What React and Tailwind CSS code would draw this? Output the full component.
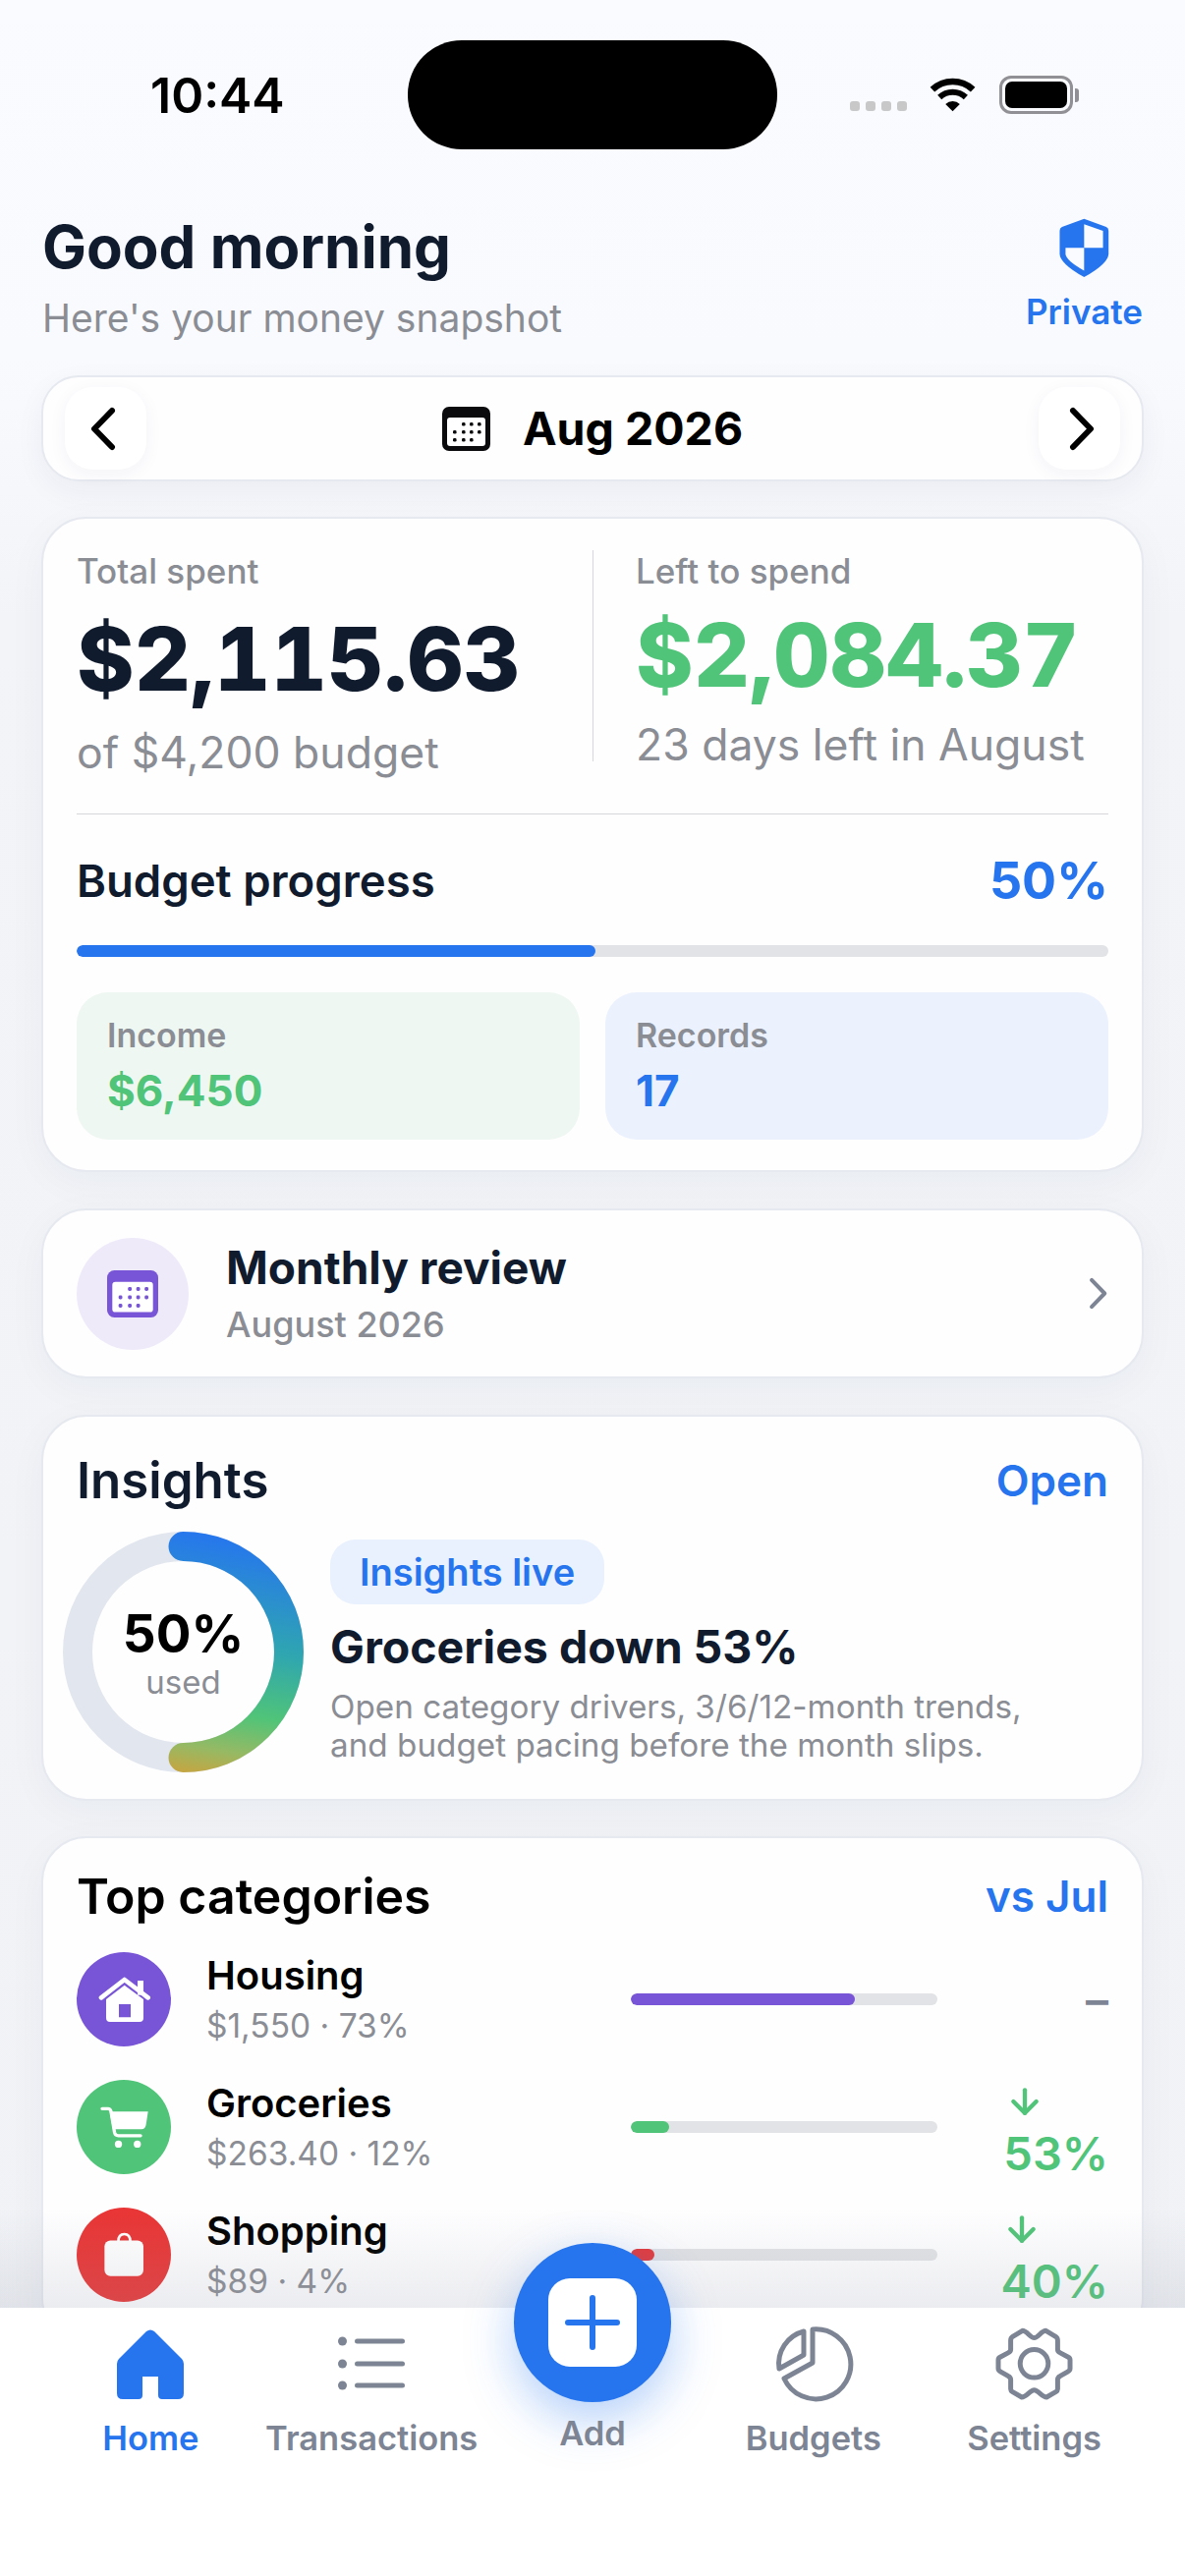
import { ArrowDown } from "lucide-react";

const cardClass = "mx-[42px] rounded-[46px] border-2 border-[#e6e9ef] bg-[#fefeff] shadow-[0_10px_40px_rgba(30,41,70,0.04)]";

const Wifi = () => (
  <svg width="50" height="38" viewBox="280 52 165 125" fill="none">
    <path d="M293 95A100 100 0 0 1 429 95" stroke="#000" strokeWidth="22" />
    <path d="M317 121A65 65 0 0 1 405 121" stroke="#000" strokeWidth="20" />
    <path d="M361 168L337 144A34 34 0 0 1 385 144Z" fill="#000" />
  </svg>
);

const Shield = () => (
  <svg width="55" height="63" viewBox="680 478 165 190">
    <path d="M762 483L830 508Q837 511 837 520L837 590Q837 620 762 662Q687 620 687 590L687 520Q687 511 694 508Z" fill="#2675ef" />
    <path d="M762 500L820 520L820 572L762 572Z" fill="#fafbff" />
    <path d="M705 572L762 572L762 642Q705 610 705 590Z" fill="#fafbff" />
  </svg>
);

const Chevron = ({ dir, width, height, stroke, color }) => (
  <svg width={width} height={height} viewBox="0 0 27 45" fill="none" stroke={color} strokeWidth={stroke} strokeLinecap="round" strokeLinejoin="round">
    <path d={dir === "left" ? "M23 4L5 22.5L23 41" : "M4 4L22 22.5L4 41"} />
  </svg>
);

const CalendarIcon = ({ color, width, height }) => {
  const dots = [
    [20, 16], [28, 16], [36, 16],
    [11, 24], [20, 24], [28, 24], [36, 24],
    [11, 32], [20, 32], [28, 32],
  ];
  return (
    <svg width={width} height={height} viewBox="0 0 49 45">
      <rect width="49" height="45" rx="7" fill={color} />
      <rect x="5" y="11" width="39" height="29" rx="3" fill="#fff" />
      {dots.map(([x, y]) => (
        <rect key={`${x}-${y}`} x={x} y={y} width="3.6" height="3.6" rx="1.4" fill={color} />
      ))}
    </svg>
  );
};

const HouseIcon = () => (
  <svg width="55" height="50" viewBox="85 90 165 150">
    <path d="M208 108H226V152H208Z" fill="#fff" />
    <path d="M97 160L168 105L240 160" fill="none" stroke="#fff" strokeWidth="14" strokeLinecap="round" strokeLinejoin="round" />
    <path fillRule="evenodd" d="M112 165L168 122L226 165V222Q226 234 214 234H124Q112 234 112 222ZM151 180V220H187V180Z" fill="#fff" />
  </svg>
);

const CartIcon = () => (
  <svg width="53" height="47" viewBox="85 485 160 140">
    <path d="M97 497H115Q122 497 124 505L135 570Q137 580 147 580H215" fill="none" stroke="#fff" strokeWidth="10" strokeLinecap="round" />
    <path d="M120 506H238L232 545Q230 560 218 560H130Z" fill="#fff" />
    <circle cx="147" cy="606" r="11" fill="#fff" />
    <circle cx="205" cy="606" r="11" fill="#fff" />
  </svg>
);

const BagIcon = () => (
  <svg width="47" height="47" viewBox="100 880 140 140">
    <path d="M152 908Q152 886 170 886Q188 886 188 908" fill="none" stroke="#fff" strokeWidth="8" />
    <rect x="110" y="905" width="118" height="108" rx="18" fill="#fff" />
  </svg>
);

const HomeNavIcon = () => (
  <svg width="68" height="71" viewBox="0 0 68 71">
    <path d="M30 2Q34 -1 38 2L66 30Q68 32 68 35V65Q68 71 62 71H46Q42 71 42 67V48H26V67Q26 71 22 71H6Q0 71 0 65V35Q0 32 2 30Z" fill="#2675ef" />
  </svg>
);

const ListNavIcon = () => (
  <svg width="68" height="74" viewBox="0 0 68 74">
    {[14, 37, 59].map((y) => (
      <g key={y}>
        <circle cx="4.5" cy={y} r="4.5" fill="#7d8594" />
        <rect x="17" y={y - 2.5} width="51" height="5" rx="2.5" fill="#7d8594" />
      </g>
    ))}
  </svg>
);

const PieNavIcon = () => (
  <svg width="85" height="85" viewBox="0 0 85 85" fill="none" stroke="#7d8594" strokeWidth="5" strokeLinejoin="round">
    <path d="M42 7A35.5 35.5 0 1 1 13 57L42 41Z" />
    <path d="M33 9A34 34 0 0 0 8 47L33 33Z" />
  </svg>
);

const GearNavIcon = () => (
  <svg width="82" height="78" viewBox="725 50 245 235" fill="none" stroke="#7d8594" strokeWidth="15" strokeLinejoin="round">
    <path d="M846 88C858 88 868 66 882 66L912 84Q918 88 918 96L918 124Q918 130 926 134L952 148Q956 150 956 156L956 182Q956 188 950 191L926 205Q918 209 918 216L918 245Q918 250 912 254L884 270C870 270 858 248 846 248C834 248 822 270 808 270L780 254Q774 250 774 245L774 216Q774 209 766 205L742 191Q736 188 736 182L736 156Q736 150 740 148L766 134Q774 130 774 124L774 96Q774 88 780 84L810 66C824 66 834 88 846 88Z" />
    <circle cx="846" cy="167" r="43" />
  </svg>
);

const InsightRing = () => (
  <div className="relative -ml-[14px] h-[245px] w-[245px] shrink-0">
    <svg width="245" height="245" viewBox="0 0 245 245" fill="none">
      <defs>
        <linearGradient id="ringGradient" gradientUnits="userSpaceOnUse" x1="150" y1="0" x2="110" y2="245">
          <stop offset="0" stopColor="#2675ef" />
          <stop offset="0.45" stopColor="#2fa6b0" />
          <stop offset="0.72" stopColor="#50c478" />
          <stop offset="0.88" stopColor="#96b964" />
          <stop offset="1" stopColor="#c9a43f" />
        </linearGradient>
      </defs>
      <circle cx="122.5" cy="122.5" r="107.5" stroke="#e2e6ee" strokeWidth="30" />
      <path d="M122.5 15A107.5 107.5 0 0 1 122.5 230" stroke="url(#ringGradient)" strokeWidth="30" strokeLinecap="round" />
    </svg>
    <div className="absolute inset-0 flex flex-col items-center justify-center">
      <span className="text-[53px] leading-[60px] font-bold text-black">50%</span>
      <span className="text-[33px] leading-[38px] text-[#8b8d94]">used</span>
    </div>
  </div>
);

const categories = [
  { name: "Housing", sub: "$1,550 · 73%", tone: "bg-[#7855d6]", bar: "w-[228px]", Icon: HouseIcon },
  { name: "Groceries", sub: "$263.40 · 12%", tone: "bg-[#50c478]", bar: "w-[39px]", Icon: CartIcon, delta: "53%" },
  { name: "Shopping", sub: "$89 · 4%", tone: "bg-[#e93535]", bar: "w-[24px]", Icon: BagIcon, delta: "40%" },
];

const CategoryRow = ({ item }) => {
  const { Icon } = item;
  return (
    <div className="flex h-[96px] items-center">
      <div className={`flex h-[96px] w-[96px] shrink-0 items-center justify-center rounded-full ${item.tone}`}>
        <Icon />
      </div>
      <div className="ml-[36px] w-[432px] shrink-0">
        <p className="text-[40px] leading-[44px] font-semibold text-black">{item.name}</p>
        <p className="mt-[9px] text-[33.5px] leading-[40px] text-[#8b8d94]">{item.sub}</p>
      </div>
      <div className="h-[12px] w-[312px] shrink-0 overflow-hidden rounded-full bg-[#e2e3e6]">
        <div className={`h-full rounded-full ${item.tone} ${item.bar}`} />
      </div>
      {item.delta ? (
        <div className="ml-auto flex flex-col items-start pt-[4px]">
          <ArrowDown size={40} strokeWidth={2.6} className="ml-[2px] text-[#50c478]" />
          <span className="mt-[9px] text-[47px] leading-[48px] font-semibold text-[#50c478]">{item.delta}</span>
        </div>
      ) : (
        <span className="ml-auto text-[46px] leading-[48px] font-semibold text-[#7d8594]">–</span>
      )}
    </div>
  );
};

const NavItem = ({ label, active, children }) => (
  <div className="flex flex-col items-center">
    <div className="flex h-[74px] items-center justify-center">{children}</div>
    <span className={`mt-[17px] text-[34.5px] leading-[44px] font-semibold whitespace-nowrap ${active ? "text-[#2675ef]" : "text-[#7d8594]"}`}>{label}</span>
  </div>
);

const App = () => {
  return (
    <div className="flex h-[2622px] w-[1206px] flex-col overflow-hidden bg-[linear-gradient(#fafbff_0%,#f9fafe_14%,#f2f4f8_24%,#f0f2f6_100%)] [font-family:Inter,sans-serif]">
      <div className="min-h-0 flex-1 overflow-hidden">
        {/* status bar */}
        <div className="mt-[41px] flex h-[111px] items-center">
          <span className="ml-[153px] w-[262px] text-[50px] leading-[60px] font-semibold text-black">10:44</span>
          <div className="h-[111px] w-[376px] rounded-[55px] bg-black" />
          <div className="ml-[74px] flex h-[40px] items-center">
            <div className="mt-[22px] flex gap-[6px]">
              {[0, 1, 2, 3].map((dot) => (
                <div key={dot} className="h-[10px] w-[10px] rounded-[3px] bg-[#c8c8c8]" />
              ))}
            </div>
            <div className="ml-[22px]"><Wifi /></div>
            <div className="ml-[22px] flex items-center">
              <div className="h-[39px] w-[75px] rounded-[12px] border-[3px] border-[#909095] p-[3px]">
                <div className="h-full w-full rounded-[7px] bg-black" />
              </div>
              <div className="ml-[2px] h-[14px] w-[4px] rounded-r-[3px] bg-[#909095]" />
            </div>
          </div>
        </div>

        {/* header */}
        <header className="mt-[63px] flex items-start justify-between px-[43px]">
          <div>
            <h1 className="text-[60px] leading-[72px] font-bold text-[#111b2e]">Good morning</h1>
            <p className="mt-[15px] text-[39px] leading-[44px] text-[#8b8d94]">Here's your money snapshot</p>
          </div>
          <div className="mt-[6px] flex flex-col items-center">
            <Shield />
            <span className="mt-[12px] text-[35px] leading-[42px] font-semibold text-[#2675ef]">Private</span>
          </div>
        </header>

        {/* month picker */}
        <div className="mx-[42px] mt-[36px] flex h-[108px] items-center justify-between rounded-[38px] border-2 border-[#e6e9ef] bg-[#fefeff] px-[22px] shadow-[0_10px_30px_rgba(30,41,70,0.05)]">
          <div className="flex h-[84px] w-[83px] items-center justify-start rounded-[28px] bg-white pl-[25px] shadow-[0_4px_18px_rgba(30,41,70,0.05)]">
            <Chevron dir="left" width={27} height={45} stroke={6} color="#000" />
          </div>
          <div className="flex items-center gap-[33px]">
            <CalendarIcon color="#0b0b0d" width={49} height={45} />
            <span className="text-[46.5px] leading-[54px] font-bold text-black">Aug 2026</span>
          </div>
          <div className="flex h-[84px] w-[83px] items-center justify-end rounded-[28px] bg-white pr-[25px] shadow-[0_4px_18px_rgba(30,41,70,0.05)]">
            <Chevron dir="right" width={27} height={45} stroke={6} color="#000" />
          </div>
        </div>

        {/* summary */}
        <section className={`${cardClass} mt-[36px] px-[34px] pt-[32px] pb-[31px]`}>
          <div className="flex">
            <div className="w-[525px] shrink-0">
              <p className="text-[35px] leading-[42px] font-medium text-[#8b8d94]">Total spent</p>
              <p className="mt-[19px] text-[89px] leading-[100px] font-extrabold text-[#111b2e] tabular-nums">$2,115.63</p>
              <p className="mt-[20px] text-[44.5px] leading-[50px] text-[#8b8d94]">of $4,200 budget</p>
            </div>
            <div className="h-[215px] w-px shrink-0 bg-[#d6d7da]" />
            <div className="ml-[43px]">
              <p className="text-[35px] leading-[42px] font-medium text-[#8b8d94]">Left to spend</p>
              <p className="mt-[15px] text-[89px] leading-[100px] font-extrabold text-[#50c478] tabular-nums">$2,084.37</p>
              <p className="mt-[16px] text-[44.5px] leading-[50px] text-[#8b8d94]">23 days left in August</p>
            </div>
          </div>
          <div className="mt-[37px] h-px bg-[#d6d7da]" />
          <div className="mt-[43px] flex items-center justify-between">
            <span className="text-[45.5px] leading-[50px] font-semibold text-[#111b2e]">Budget progress</span>
            <span className="text-[52px] leading-[50px] font-bold text-[#2675ef]">50%</span>
          </div>
          <div className="mt-[40px] h-[12px] overflow-hidden rounded-full bg-[#e2e3e6]">
            <div className="h-full w-[50.3%] rounded-full bg-[#2675ef]" />
          </div>
          <div className="mt-[36px] grid grid-cols-2 gap-[26px]">
            <div className="h-[150px] rounded-[32px] bg-[#eff7f2] pt-[24px] pl-[31px]">
              <p className="text-[34px] leading-[40px] font-semibold text-[#8b8d94]">Income</p>
              <p className="mt-[11px] text-[44px] leading-[50px] font-bold text-[#50c478]">$6,450</p>
            </div>
            <div className="h-[150px] rounded-[32px] bg-[#ebf2fd] pt-[24px] pl-[31px]">
              <p className="text-[34px] leading-[40px] font-semibold text-[#8b8d94]">Records</p>
              <p className="mt-[11px] text-[44px] leading-[50px] font-bold text-[#2675ef]">17</p>
            </div>
          </div>
        </section>

        {/* monthly review */}
        <section className={`${cardClass} mt-[37px] flex h-[173px] items-center px-[34px]`}>
          <div className="flex h-[114px] w-[114px] shrink-0 items-center justify-center rounded-full bg-[#efeaf9]">
            <CalendarIcon color="#7855d6" width={52} height={48} />
          </div>
          <div className="ml-[38px] flex-1 pt-[2px]">
            <p className="text-[46px] leading-[50px] font-bold text-[#111b2e]">Monthly review</p>
            <p className="mt-[11px] text-[36px] leading-[44px] font-medium text-[#8b8d94]">August 2026</p>
          </div>
          <Chevron dir="right" width={20} height={33} stroke={5.5} color="#7d8594" />
        </section>

        {/* insights */}
        <section className={`${cardClass} mt-[37px] h-[393px] px-[34px] pt-[35px]`}>
          <div className="flex items-center justify-between">
            <h2 className="text-[51px] leading-[60px] font-semibold text-[#111b2e]">Insights</h2>
            <span className="text-[44px] leading-[60px] font-semibold text-[#2675ef]">Open</span>
          </div>
          <div className="mt-[22px] flex">
            <InsightRing />
            <div className="ml-[27px] pt-[8px]">
              <span className="inline-block h-[66px] rounded-[26px] bg-[#e8f1fd] px-[30px] text-[38px] leading-[66px] font-semibold text-[#2675ef]">Insights live</span>
              <p className="mt-[18px] text-[46.5px] leading-[50px] font-bold text-[#111b2e]">Groceries down 53%</p>
              <p className="mt-[17px] text-[33.25px] leading-[39px] text-[#8b8d94]">
                Open category drivers, 3/6/12-month trends,
                <br />
                and budget pacing before the month slips.
              </p>
            </div>
          </div>
        </section>

        {/* categories */}
        <section className={`${cardClass} mt-[36px] px-[34px] pt-[31px] pb-[40px]`}>
          <div className="flex items-center justify-between">
            <h2 className="text-[50px] leading-[56px] font-semibold text-black">Top categories</h2>
            <span className="text-[44px] leading-[56px] font-semibold text-[#2675ef]">vs Jul</span>
          </div>
          <div className="mt-[29px] flex flex-col gap-[34px]">
            {categories.map((item) => (
              <CategoryRow key={item.name} item={item} />
            ))}
          </div>
        </section>
      </div>

      {/* tab bar */}
      <nav className="relative grid h-[273px] shrink-0 grid-cols-5 bg-white px-[41px] pt-[20px]">
        <div className="pointer-events-none absolute right-0 -top-[100px] left-0 h-[100px] bg-gradient-to-b from-transparent to-[#969baa2e]" />
        <NavItem label="Home" active><HomeNavIcon /></NavItem>
        <NavItem label="Transactions"><ListNavIcon /></NavItem>
        <div className="relative z-10 -mt-[86px] flex flex-col items-center">
          <div className="flex h-[162px] w-[160px] items-center justify-center rounded-full bg-[#2675ef] shadow-[0_18px_50px_rgba(38,117,239,0.35)]">
            <div className="flex h-[90px] w-[90px] items-center justify-center rounded-[22px] bg-white">
              <svg width="56" height="56" viewBox="0 0 56 56" fill="none" stroke="#2675ef" strokeWidth="6" strokeLinecap="round">
                <path d="M28 3V53M3 28H53" />
              </svg>
            </div>
          </div>
          <span className="mt-[10px] text-[34.5px] leading-[44px] font-semibold text-[#7d8594]">Add</span>
        </div>
        <NavItem label="Budgets"><PieNavIcon /></NavItem>
        <NavItem label="Settings"><GearNavIcon /></NavItem>
      </nav>
    </div>
  );
};

export default App;
